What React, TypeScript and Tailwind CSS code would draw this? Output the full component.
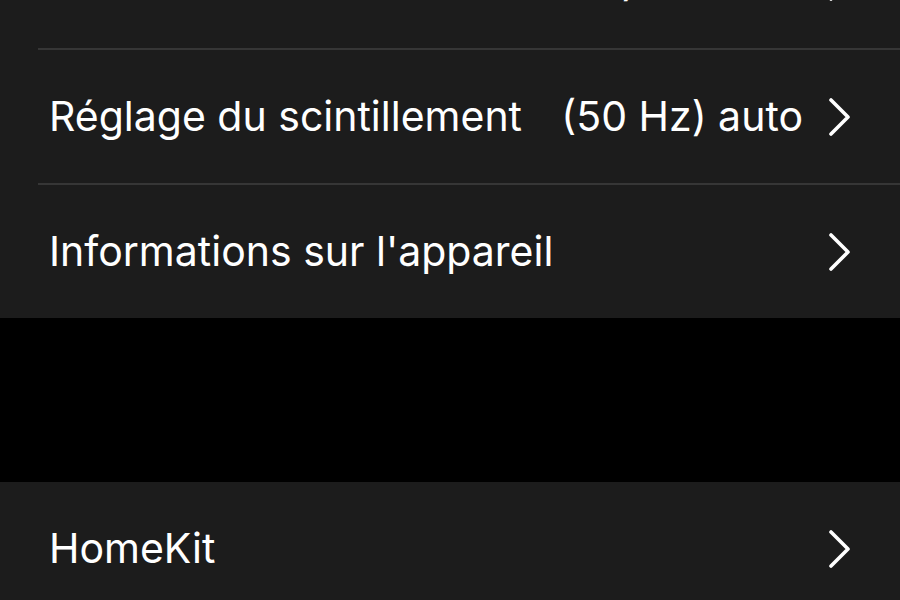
import { ReactNode } from 'react';

function Chevron() {
  return (
    <svg width="24" height="38" viewBox="0 0 24 38" className="shrink-0">
      <polyline
        points="4,2 21,19 4,36"
        fill="none"
        stroke="#ffffff"
        strokeWidth="3.6"
        strokeLinecap="round"
        strokeLinejoin="round"
      />
    </svg>
  );
}

function Row({ label, value, className = '' }: { label: string; value?: ReactNode; className?: string }) {
  return (
    <div className={`flex items-center h-[133px] pl-[49px] pr-[49px] ${className}`}>
      <span className="flex-1 min-w-0 whitespace-nowrap">{label}</span>
      {value && <span className="whitespace-nowrap mr-[24px]">{value}</span>}
      <Chevron />
    </div>
  );
}

function Divider() {
  return <div className="ml-[38px] h-[2px] bg-[#363636]" />;
}

export default function App() {
  return (
    <div
      className="w-[900px] h-[600px] overflow-hidden bg-black text-white text-[41px] leading-[1.2]"
      style={{ fontFamily: 'Inter, "Open Sans", sans-serif' }}
    >
      <div className="bg-[#1c1c1c]">
        <Row label="Luminosité" value="(Fluorescent) 4 000 K" className="-mt-[85px]" />
        <Divider />
        <Row label="Réglage du scintillement" value="(50 Hz) auto" />
        <Divider />
        <Row label="Informations sur l'appareil" />
      </div>
      <div className="h-[164px]" />
      <div className="bg-[#1c1c1c] h-[200px]">
        <Row label="HomeKit" />
      </div>
    </div>
  );
}
